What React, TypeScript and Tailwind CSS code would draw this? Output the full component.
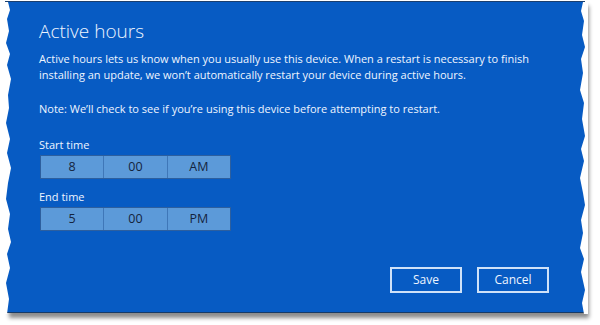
import React from 'react';

function TimeBox({ values }: { values: string[] }) {
  return (
    <div className="flex w-[191px] h-[24px] border border-[#2d5f9e] bg-[#5c9ad9]">
      {values.map((v, i) => (
        <div
          key={i}
          className={
            'flex-1 flex items-center justify-center text-[12.5px] text-[#14243d] ' +
            (i > 0 ? 'border-l border-[#3f77b8]' : '')
          }
        >
          {v}
        </div>
      ))}
    </div>
  );
}

function TornEdge({ side }: { side: 'left' | 'right' }) {
  // jagged paper edge drawn over the panel edge
  const pts =
    side === 'left'
      ? 'M0,0 L4,0 L6,8 L3,17 L5,29 L2,41 L6,52 L3,63 L7,77 L4,93 L5,106 L2,121 L6,137 L3,151 L7,166 L4,181 L2,197 L6,212 L4,227 L7,240 L3,252 L6,266 L2,281 L5,297 L3,312 L0,312 Z'
      : 'M8,0 L3,0 L1,9 L4,19 L2,33 L5,45 L1,57 L3,71 L0,88 L4,101 L2,117 L5,134 L1,147 L4,159 L0,176 L3,191 L5,203 L1,218 L3,231 L0,246 L4,257 L1,270 L5,288 L2,301 L4,312 L8,312 Z';
  return (
    <svg
      width="8"
      height="312"
      viewBox="0 0 8 312"
      className={'absolute top-0 ' + (side === 'left' ? 'left-[-1px]' : 'right-[-3px]')}
    >
      <path d={pts} fill="#ffffff" />
    </svg>
  );
}

export default function App() {
  return (
    <div
      className="w-[600px] h-[325px] bg-white overflow-hidden"
      style={{ fontFamily: '"Open Sans", "Noto Sans", sans-serif' }}
    >
      <div className="relative ml-[5px] mt-[1px] w-[580px] h-[312px] bg-[#075bc3] border-t border-[#1b3f6e] border-b border-b-[#163a66] shadow-[4px_5px_4px_rgba(0,0,0,0.45)]">
        <div className="pl-[34px] pt-[15px] pr-[20px] text-[#eef5ff]">
          <h1 className="text-[19px] font-light leading-[28px]">Active hours</h1>
          <p className="mt-[6px] text-[11px] leading-[16px]">
            Active hours lets us know when you usually use this device. When a restart is necessary to finish
            <br />
            installing an update, we won’t automatically restart your device during active hours.
          </p>
          <p className="mt-[18px] text-[11px] leading-[16px]">
            Note: We’ll check to see if you’re using this device before attempting to restart.
          </p>
          <div className="mt-[20px] text-[11px] leading-[16px]">Start time</div>
          <div className="mt-[2px] ml-[1px]">
            <TimeBox values={['8', '00', 'AM']} />
          </div>
          <div className="mt-[10px] text-[11px] leading-[16px]">End time</div>
          <div className="mt-[2px] ml-[1px]">
            <TimeBox values={['5', '00', 'PM']} />
          </div>
          <div className="flex justify-end gap-[15px] mt-[36px] mr-[16px]">
            <button className="w-[72px] h-[26px] border-2 border-[#cfe2f8] text-[12px]">Save</button>
            <button className="w-[72px] h-[26px] border-2 border-[#cfe2f8] text-[12px]">Cancel</button>
          </div>
        </div>
        <TornEdge side="left" />
        <TornEdge side="right" />
      </div>
    </div>
  );
}
